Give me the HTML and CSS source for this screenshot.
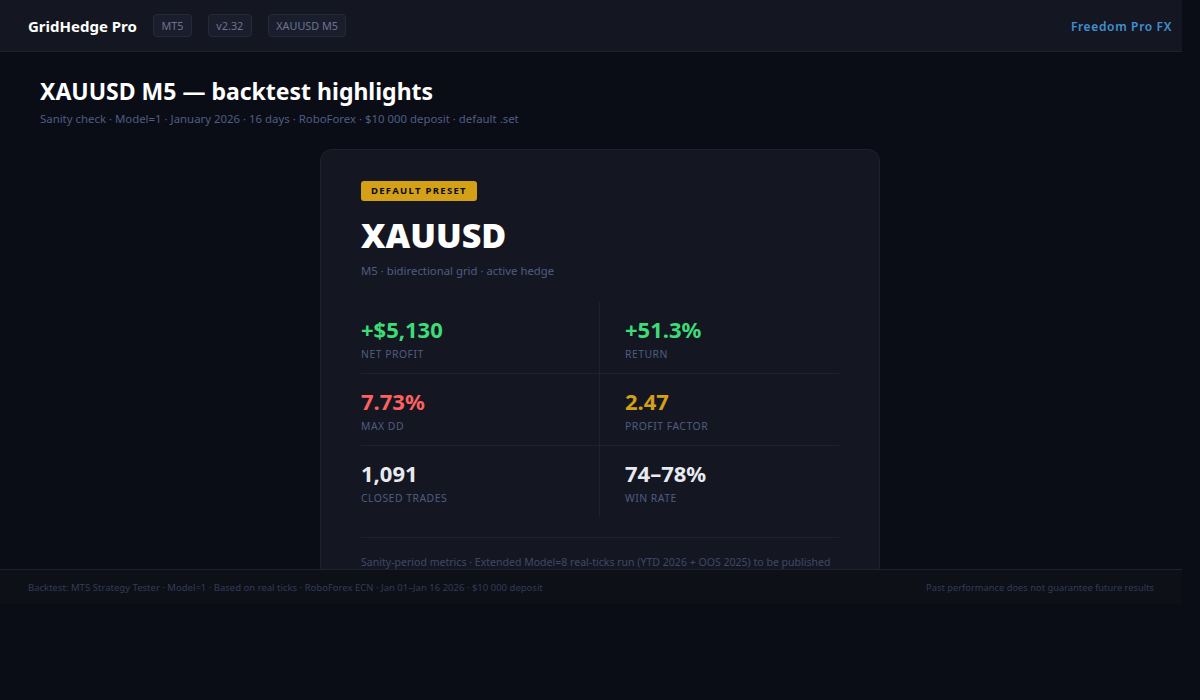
FILE: index.html
```html
<!DOCTYPE html>
<html lang="en">
<head>
<meta charset="utf-8">
<title>GridHedge Pro</title>
<link rel="stylesheet" href="styles.css">
</head>
<body>
<div class="shell">
  <header class="topbar">
    <div class="brand">GridHedge Pro</div>
    <span class="tag">MT5</span>
    <span class="tag">v2.32</span>
    <span class="tag">XAUUSD M5</span>
    <div class="owner">Freedom Pro FX</div>
  </header>
  <main class="main">
    <h1 class="title">XAUUSD M5 — backtest highlights</h1>
    <p class="subtitle">Sanity check · Model=1 · January 2026 · 16 days · RoboForex · $10 000 deposit · default .set</p>
    <section class="card">
      <span class="badge">DEFAULT PRESET</span>
      <h2 class="symbol">XAUUSD</h2>
      <p class="desc">M5 · bidirectional grid · active hedge</p>
      <div class="metrics">
        <div class="metric"><div class="value green">+$5,130</div><div class="label">NET PROFIT</div></div>
        <div class="metric right"><div class="value green">+51.3%</div><div class="label">RETURN</div></div>
        <div class="metric"><div class="value red">7.73%</div><div class="label">MAX DD</div></div>
        <div class="metric right"><div class="value gold">2.47</div><div class="label">PROFIT FACTOR</div></div>
        <div class="metric last"><div class="value">1,091</div><div class="label">CLOSED TRADES</div></div>
        <div class="metric right last"><div class="value">74–78%</div><div class="label">WIN RATE</div></div>
      </div>
      <p class="note">Sanity-period metrics · Extended Model=8 real-ticks run (YTD 2026 + OOS 2025) to be published</p>
    </section>
  </main>
  <footer class="footer">
    <span class="foot-left">Backtest: MT5 Strategy Tester · Model=1 · Based on real ticks · RoboForex ECN · Jan 01–Jan 16 2026 · $10 000 deposit</span>
    <span class="foot-right">Past performance does not guarantee future results</span>
  </footer>
</div>
</body>
</html>
```
FILE: styles.css
```css
* { box-sizing: border-box; }
html, body { margin: 0; padding: 0; height: 100%; overflow: hidden; }
body { background: #0b0d16; color: #fff; font-family: "Noto Sans", "Open Sans", sans-serif; }
.shell { width: 1200px; height: 700px; overflow: hidden; }
.topbar {
  width: 1182px; height: 52px; display: flex; align-items: center; gap: 16px;
  padding: 0 28px; background: #141721; border-bottom: 1px solid #1e2130;
}
.brand { font-size: 15px; font-weight: 700; color: #fff; }
.tag {
  font-size: 10.8px; color: #6b7590; background: #1a1e2c; border: 1px solid #252a3a;
  border-radius: 4px; padding: 3px 7.5px; line-height: 15px;
}
.owner { margin-left: auto; margin-right: -18px; padding-top: 1px; font-size: 12px; font-weight: 600; letter-spacing: .65px; color: #4090d0; }
.main { height: 517px; padding: 24px 40px 0; overflow: hidden; }
.title { margin: 0; font-size: 23px; line-height: 30px; font-weight: 700; color: #fff; }
.subtitle { margin: 5px 0 0; font-size: 11.4px; line-height: 16px; color: #505c82; }
.card {
  width: 560px; height: 500px; margin: 22px auto 0; padding: 31px 40px;
  background: #141721; border: 1px solid #1e2130; border-radius: 12px;
}
.badge {
  display: block; width: fit-content; background: #d4a017; color: #0a0c14; font-size: 9.5px; font-weight: 700;
  letter-spacing: 1.3px; line-height: 14px; padding: 3px 10px; border-radius: 3px;
}
.symbol { margin: 12px 0 0; font-size: 34px; line-height: 44px; font-weight: 900; color: #fff; }
.desc { margin: 6px 0 0; font-size: 11.35px; line-height: 16px; color: #505c82; }
.metrics { display: grid; grid-template-columns: 238px 1fr; margin-top: 23px; }
.metric { height: 72px; padding-top: 12px; border-bottom: 1px solid #1e2130; }
.metric.right { padding-left: 25px; border-left: 1px solid #1e2130; }
.metric.last { height: 70px; border-bottom: 0; }
.value { font-size: 22px; line-height: 30px; font-weight: 700; color: #e8eaf0; }
.label { margin-top: 3px; font-size: 10.4px; line-height: 14px; letter-spacing: .5px; color: #505c82; }
.green { color: #3ddc78; }
.red { color: #ff6060; }
.gold { color: #d4a017; }
.note { margin: 21px 0 0; padding-top: 16px; border-top: 1px solid #1e2130; font-size: 10.55px; line-height: 16px; color: #3f4868; }
.footer {
  width: 1182px; height: 35px; display: flex; justify-content: space-between; align-items: center;
  padding: 0 28px; background: #0e1018; border-top: 1px solid #1e2130;
  color: #333a58;
}
.foot-left { font-size: 9.52px; }
.foot-right { font-size: 9.33px; }
```
